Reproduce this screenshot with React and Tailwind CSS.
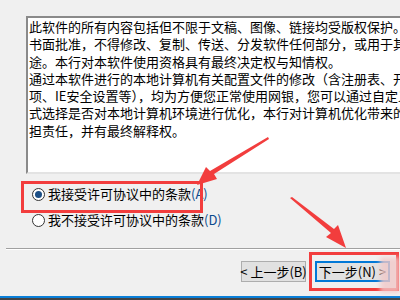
const lines = [
  "此软件的所有内容包括但不限于文稿、图像、链接均受版权保护。",
  "书面批准，不得修改、复制、传送、分发软件任何部分，或用于其他用",
  "途。本行对本软件使用资格具有最终决定权与知情权。",
  "通过本软件进行的本地计算机有关配置文件的修改（含注册表、开机启动",
  "项、IE安全设置等），均为方便您正常使用网银，您可以通过自定义方",
  "式选择是否对本地计算机环境进行优化，本行对计算机优化带来的后果不",
  "担责任，并有最终解释权。",
];

function Radio({ checked }) {
  return (
    <span className="w-[13px] h-[13px] rounded-full border border-[#333] bg-white flex items-center justify-center shrink-0">
      {checked && <span className="w-[7px] h-[7px] rounded-full bg-[#1c4f86]" />}
    </span>
  );
}

export default function App() {
  return (
    <div className="relative w-[400px] h-[300px] overflow-hidden bg-[#f0f0f0] flex flex-col font-['Noto_Sans_CJK_SC',_'Noto_Sans',_sans-serif] text-[13px] text-black">
      {/* license text box */}
      <div className="ml-[26px] mt-[16px] h-[158px] w-[440px] shrink-0 bg-white border-2 border-t-[#8a8a8a] border-l-[#8a8a8a] border-r-[#e3e3e3] border-b-[#e3e3e3] pl-[1px] overflow-hidden">
        {lines.map((l, i) => (
          <div key={i} className="whitespace-nowrap leading-[17.3px]">
            {l}
          </div>
        ))}
      </div>

      {/* radios */}
      <div className="mt-[7px] flex flex-col">
        <label className="h-[26px] pl-[32px] flex items-center gap-[3px]">
          <Radio checked />
          <span>
            我接受许可协议中的条款<span className="text-[#0a4a8c]">(A)</span>
          </span>
        </label>
        <label className="h-[26px] pl-[32px] flex items-center gap-[3px]">
          <Radio />
          <span>
            我不接受许可协议中的条款<span className="text-[#0a4a8c]">(D)</span>
          </span>
        </label>
      </div>

      {/* separator */}
      <div className="mt-[15px] ml-[6px] h-px bg-[#a0a0a0]" />
      <div className="ml-[6px] h-px bg-white" />

      {/* buttons */}
      <div className="mt-[11px] pl-[241px] flex gap-[9px]">
        <button className="w-[65px] h-[21px] border border-[#adadad] bg-[#e1e1e1] flex items-center justify-center leading-none whitespace-nowrap">
          &lt; 上一步(B)
        </button>
        <button className="w-[75px] h-[21px] border-2 border-[#0078d7] bg-[#e1e1e1] flex items-center justify-center leading-none whitespace-nowrap">
          下一步(N) &gt;
        </button>
      </div>

      {/* window bottom edge */}
      <div className="mt-auto h-[2px] bg-[#0a7fd8]" />
      <div className="h-[2px] bg-[#444]" />

      {/* annotations */}
      <div className="absolute left-[21px] top-[181px] w-[182px] h-[32px] border-[3px] border-[#f23d3d]" />
      <div className="absolute left-[309px] top-[252px] w-[90px] h-[39px] border-[3px] border-[#f23d3d]" />
      <div className="absolute left-[380px] top-[257px] w-[20px] h-[36px] bg-[#f1c9c9] opacity-80 blur-[2px]" />
      <svg className="absolute left-0 top-0 pointer-events-none" width="400" height="300">
        <polygon points="268,137 269,139 214,174 217,179 197,185 206,167 210,171" fill="#f23d3d" />
        <polygon points="290,198 292,197 334,229 338,225 346,248 326,237 331,233" fill="#f23d3d" />
      </svg>
    </div>
  );
}
